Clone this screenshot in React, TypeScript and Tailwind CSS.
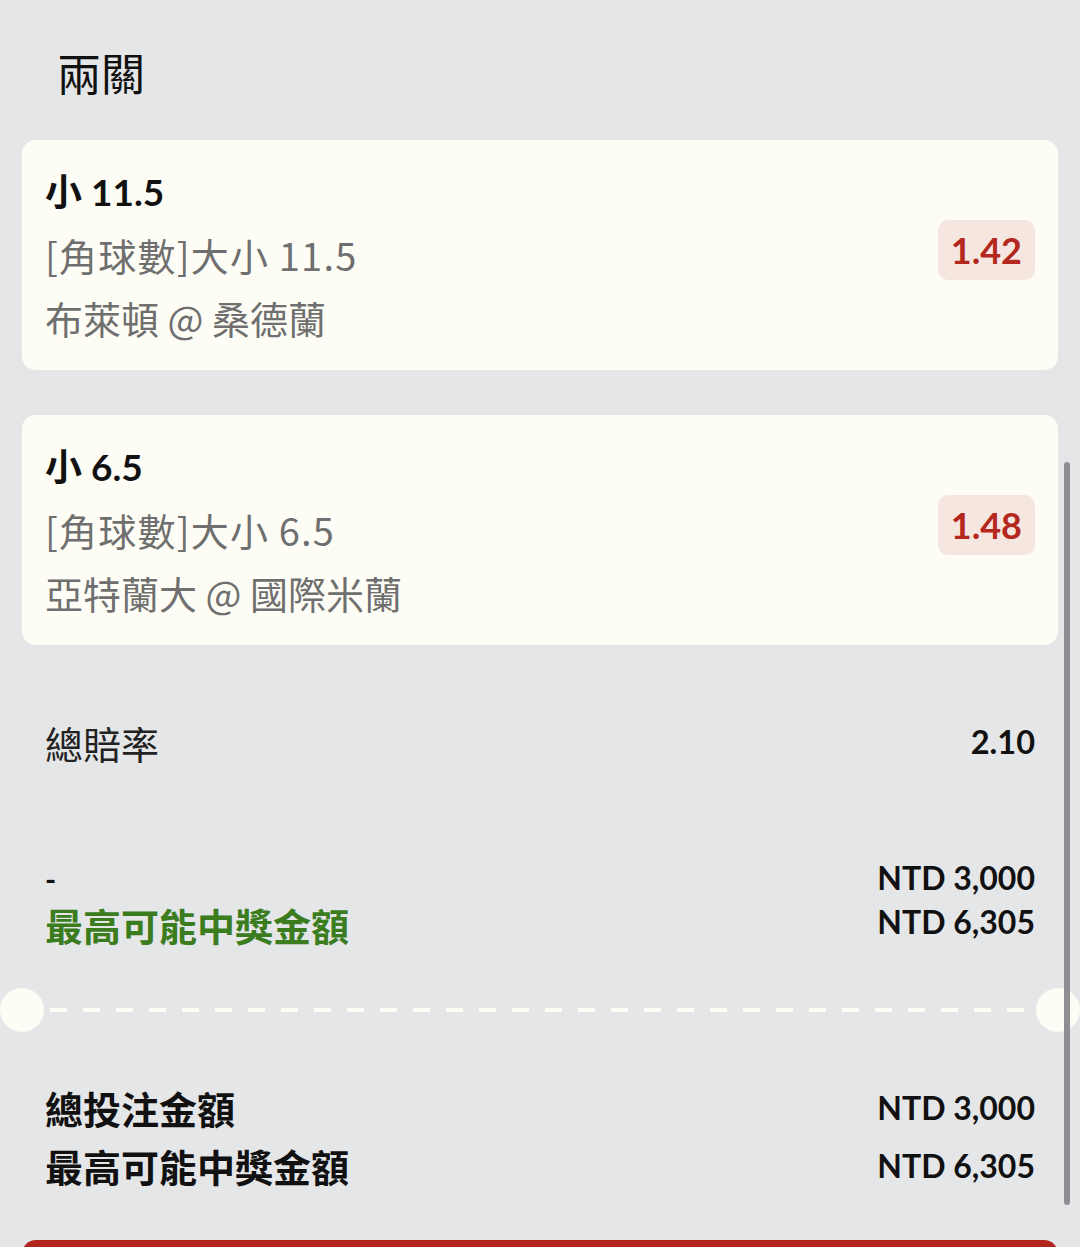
import React from "react";

type Leg = {
  pick: string;
  market: string;
  match: string;
  odds: string;
};

const legs: Leg[] = [
  { pick: "小 11.5", market: "[角球數]大小 11.5", match: "布萊頓 @ 桑德蘭", odds: "1.42" },
  { pick: "小 6.5", market: "[角球數]大小 6.5", match: "亞特蘭大 @ 國際米蘭", odds: "1.48" },
];

const latin = "font-['Lato','Noto_Sans_CJK_TC',sans-serif]";
const cjk = "font-['Noto_Sans_CJK_TC','Noto_Sans',sans-serif]";

function LegCard({ leg }: { leg: Leg }) {
  return (
    <div className="bg-[#fefdf5] rounded-[14px] h-[230px] pl-[23px] pr-[23px] pt-[20px] flex items-center justify-between">
      <div className="flex flex-col self-start">
        <div className={`${latin} font-bold text-[37px] leading-[63px] text-[#111]`}>{leg.pick}</div>
        <div className={`${cjk} text-[38px] leading-[63px] tracking-[1.2px] text-[#6f6f6f]`}>{leg.market}</div>
        <div className={`${cjk} text-[38px] leading-[63px] text-[#6f6f6f]`}>{leg.match}</div>
      </div>
      <div className="self-start mt-[60px] bg-[#f6e6e0] rounded-[10px] h-[60px] px-[13px] flex items-center">
        <span className={`${latin} font-bold text-[36px] text-[#b4271d]`}>{leg.odds}</span>
      </div>
    </div>
  );
}

export default function App() {
  return (
    <div className="relative w-[1080px] h-[1247px] overflow-hidden bg-[#e5e6e8]">
      <div className="px-[22px]">
        {/* header */}
        <div className="h-[140px] pt-[4px] pl-[35px] flex items-center">
          <h1 className={`${cjk} text-[44px] text-[#111]`}>兩關</h1>
        </div>

        {/* legs */}
        <div className="flex flex-col gap-[45px]">
          {legs.map((leg) => (
            <LegCard key={leg.odds} leg={leg} />
          ))}
        </div>

        {/* total odds */}
        <div className="mt-[70px] h-[54px] px-[23px] flex items-center justify-between">
          <span className={`${cjk} text-[38px] text-[#222]`}>總賠率</span>
          <span className={`${latin} font-bold text-[32.5px] text-[#111]`}>2.10</span>
        </div>

        {/* stake + max return */}
        <div className="mt-[87px] px-[23px] flex justify-between">
          <div className="flex flex-col">
            <span className={`${latin} font-bold text-[30px] leading-[46px] text-[#111]`}>-</span>
            <span className={`${cjk} font-bold text-[38px] leading-[46px] text-[#3b7d1e]`}>最高可能中獎金額</span>
          </div>
          <div className={`${latin} font-bold text-[32px] leading-[44px] text-[#111] text-right`}>
            <div>NTD 3,000</div>
            <div>NTD 6,305</div>
          </div>
        </div>

        {/* ticket divider */}
        <div className="mt-[40px] -mx-[22px] h-[44px] flex items-center">
          <div className="w-[44px] h-[44px] rounded-full bg-[#fefdf5] shrink-0" />
          <div className="flex-1 mx-[6px] h-[4px] bg-[repeating-linear-gradient(90deg,#fefdf5_0_17px,transparent_17px_33px)]" />
          <div className="w-[44px] h-[44px] rounded-full bg-[#fefdf5] shrink-0" />
        </div>

        {/* totals */}
        <div className="mt-[47px] px-[23px] flex justify-between">
          <div className={`${cjk} font-bold text-[38px] leading-[58px] text-[#111] flex flex-col`}>
            <span>總投注金額</span>
            <span>最高可能中獎金額</span>
          </div>
          <div className={`${latin} font-bold text-[32px] leading-[58px] text-[#111] text-right`}>
            <div>NTD 3,000</div>
            <div>NTD 6,305</div>
          </div>
        </div>

        {/* submit button (cut off) */}
        <div className="mt-[45px] h-[60px] rounded-t-[14px] bg-[#b3261e]" />
      </div>

      {/* scrollbar */}
      <div className="absolute right-[10px] top-[462px] w-[6px] h-[743px] rounded-full bg-[#8e8e93]" />
    </div>
  );
}
